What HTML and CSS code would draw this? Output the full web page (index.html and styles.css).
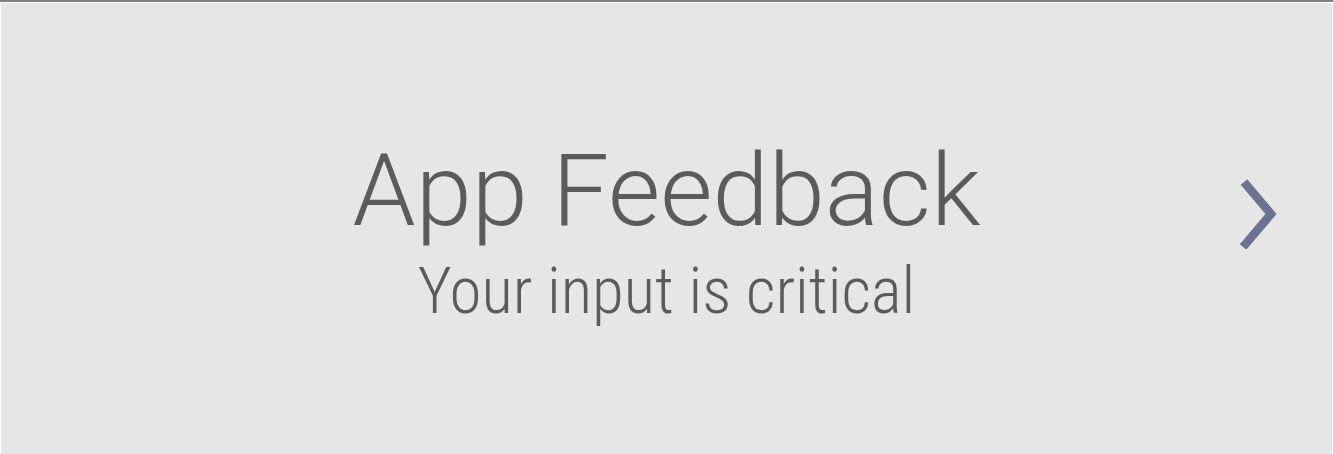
FILE: index.html
```html
<!DOCTYPE html>
<html>
<head>
<meta charset="utf-8">
<link rel="stylesheet" href="styles.css">
</head>
<body>
<div class="topbar"></div>
<section class="panel">
  <div class="spacer"></div>
  <div class="text">
    <h1 class="title">App Feedback</h1>
    <p class="subtitle">Your input is critical</p>
  </div>
  <div class="action">
    <svg class="chevron" width="40" height="72" viewBox="0 0 40 72">
      <polyline points="6,5 33,37 5,70" fill="none" stroke="#6b7391" stroke-width="8.5" stroke-linejoin="miter"/>
    </svg>
  </div>
</section>
</body>
</html>
```
FILE: styles.css
```css
html, body {
  margin: 0;
  padding: 0;
  background: #ffffff;
  width: 1333px;
  height: 454px;
  overflow: hidden;
}
.topbar {
  height: 2px;
  background: #808080;
  margin-bottom: 1px;
}
.panel {
  margin: 0 1px;
  height: 451px;
  background: #e6e6e6;
  display: grid;
  grid-template-columns: 1fr auto 1fr;
  align-items: center;
}
.text {
  display: flex;
  flex-direction: column;
  align-items: center;
  color: #5b5b5b;
  font-family: Roboto, "Liberation Sans", sans-serif;
  margin-top: 9px;
}
.title {
  margin: 0;
  font-size: 101px;
  font-weight: 300;
  line-height: 100px;
  white-space: nowrap;
}
.subtitle {
  margin: 15px 0 0;
  font-size: 65px;
  font-weight: 300;
  font-stretch: condensed;
  line-height: 70px;
  white-space: nowrap;
}
.action {
  justify-self: end;
  display: flex;
  margin-right: 54px;
  margin-top: -32px;
}
.chevron {
  display: block;
}
```
